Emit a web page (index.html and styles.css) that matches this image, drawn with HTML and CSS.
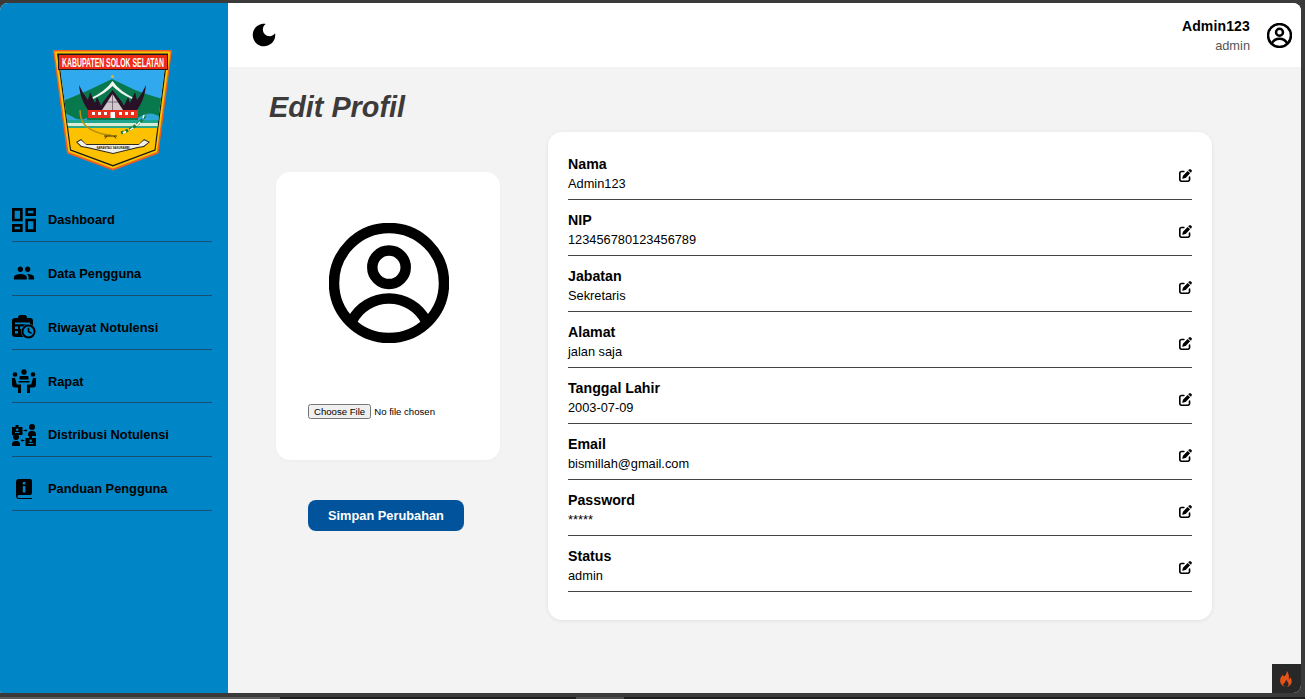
FILE: index.html
```html
<!DOCTYPE html>
<html lang="id">
<head>
<meta charset="utf-8">
<title>Edit Profil</title>
<link rel="stylesheet" href="styles.css">
</head>
<body>
<div class="top-strip"></div>
<div class="window">
  <aside class="sidebar">
    <div class="logo-wrap">
      <svg class="logo" viewBox="0 0 120 121" role="img" aria-label="Logo Kabupaten Solok Selatan">
        <defs><clipPath id="shield-inner"><path d="M5.500 5H113.500L101.500 99.500L60 115L18 99.500Z"/></clipPath></defs>
        <path d="M0 0H119L105.500 103.500L60 120.500L14 103.500Z" fill="#ef5f24"/>
        <path d="M1.500 1.500H117.500L104 102L60 118.500L15.500 102Z" fill="#f8c400"/>
        <path d="M4 3.500H115L102.500 100.500L60 116.500L17 100.500Z" fill="#1a1a1a"/>
        <path d="M5.500 5H113.500L101.500 99.500L60 115L18 99.500Z" fill="#fcc200"/>
        <g clip-path="url(#shield-inner)">
          <rect x="0" y="20" width="120" height="50" fill="#31a9ef"/>
          <path d="M0 55Q20 47 36 40L59 29L82 40Q98 46 120 52V70H0Z" fill="#08794c"/>
          <path d="M0 68Q10 60 18 66T34 68V72H0ZM85 68Q95 61 103 65T120 66V72H85Z" fill="#2ea7d8"/>
          <rect x="0" y="70" width="120" height="3" fill="#1ea58f"/>
          <rect x="0" y="73" width="120" height="3" fill="#dcecd4"/>
          <rect x="0" y="76" width="120" height="2" fill="#29a889"/>
        </g>
        <rect x="5" y="4" width="110" height="16" fill="#1a1a1a"/>
        <rect x="6" y="5" width="108" height="14" fill="#ef2b16"/>
        <text class="logo-title" transform="translate(60 17) scale(.53 1)" text-anchor="middle">KABUPATEN SOLOK SELATAN</text>
        <circle cx="59.500" cy="26.500" r="1.600" fill="#c8b84a"/>
        <path d="M36 49Q52 42 59.500 31Q67 42 83 49L79 49Q66 43 59.500 36Q53 43 40 49Z" fill="#f4f4f4"/>
        <path d="M26 35C27 45 30 53 35 60H50L44 47L42 53L37 42L35 50Q30 44 26 35Z" fill="#2a1026"/>
        <path d="M93 35C92 45 89 53 84 60H69L75 47L77 53L82 42L84 50Q89 44 93 35Z" fill="#2a1026"/>
        <path d="M59.500 40L50 52L46 60H73L69 52Z" fill="#2a1026"/>
        <path d="M59.500 44L49 60H70Z" fill="#cfc8cc"/>
        <path d="M59.500 44V60M54 52H65" stroke="#5c4a58" stroke-width=".7"/>
        <rect x="35" y="60" width="50" height="8" fill="#e8301c"/>
        <path d="M39 62h3v3h-3zM45 62h3v3h-3zM51 62h3v3h-3zM57.500 62h4.500v6h-4.500zM66 62h3v3h-3zM72 62h3v3h-3zM78 62h3v3h-3z" fill="#fff"/>
        <path d="M27 60Q27 74 37 79Q48 85 58 85" fill="none" stroke="#b8930f" stroke-width="1.500"/>
        <path d="M51 86H64M54 86L52 88.500M61 86L63 88.500" stroke="#3c2a00" stroke-width="1"/>
        <path d="M68 83Q80 79 88 71Q93 66 93 62" fill="none" stroke="#1f7a3e" stroke-width="3" stroke-dasharray="3 1.500"/>
        <path d="M70 83l3-1.500M77 80l3-2M84 75l3-3M90 68l1-3" stroke="#fff" stroke-width="1.500"/>
        <path d="M23 92L28 89L33 94H86L91 89L97 92L91 97L85 98L60 104L34 98L28 97Z" fill="#2e2a20"/>
        <path d="M24.500 92.200L28 90.300L33.500 95H85.500L91 90.300L95.500 92.200L90.500 96L84.500 97L60 103L34.500 97L28.500 96Z" fill="#f2f0ea"/>
        <text class="logo-motto" x="60" y="99" text-anchor="middle">SARANTAU SASURAMBI</text>
      </svg>
    </div>
    <nav class="nav">
      <a class="nav-item" href="#">
        <span class="nav-icon"><svg class="icon-24" viewBox="3 3 18 18"><path d="M19 5v2h-4V5h4M9 5v6H5V5h4m10 8v6h-4v-6h4M9 17v2H5v-2h4M21 3h-8v6h8V3zM11 3H3v10h8V3zm10 8h-8v10h8V11zm-10 4H3v6h8v-6z"/></svg></span>
        <span>Dashboard</span>
      </a>
      <a class="nav-item" href="#">
        <span class="nav-icon"><svg class="icon-people" viewBox="0 0 24 24"><path d="M16 11c1.660 0 2.990-1.340 2.990-3S17.660 5 16 5c-1.660 0-3 1.340-3 3s1.340 3 3 3zm-8 0c1.660 0 2.990-1.340 2.990-3S9.660 5 8 5C6.340 5 5 6.340 5 8s1.340 3 3 3zm0 2c-2.330 0-7 1.170-7 3.500V19h14v-2.500c0-2.330-4.670-3.500-7-3.500zm8 0c-.290 0-.620.020-.970.050 1.160.840 1.970 1.970 1.970 3.450V19h6v-2.500c0-2.330-4.670-3.500-7-3.500z"/></svg></span>
        <span>Data Pengguna</span>
      </a>
      <a class="nav-item" href="#">
        <span class="nav-icon"><svg class="icon-24" viewBox="0 0 24 24">
          <path d="M6 3V2.500A2.500 2.500 0 0 1 8.500 0h4A2.500 2.500 0 0 1 15 2.500V3h3a3 3 0 0 1 3 3v16H3a3 3 0 0 1-3-3V6a3 3 0 0 1 3-3z"/>
          <path class="cut" d="M3 7.500h15v1.800H3zM3 11.500h3v2.500H3zM3 16h3v2.500H3zM8 11.500h3v2.500H8z"/>
          <circle class="cut" cx="16.500" cy="16.500" r="7.500"/>
          <circle cx="16.500" cy="16.500" r="7"/>
          <circle class="cut" cx="16.500" cy="16.500" r="5"/>
          <path d="M15.700 12.800h1.600v3.300l2.600 1.600-.8 1.300-3.400-2.100z"/>
        </svg></span>
        <span>Riwayat Notulensi</span>
      </a>
      <a class="nav-item" href="#">
        <span class="nav-icon"><svg class="icon-24" viewBox="0 0 24 24">
          <circle cx="12" cy="3" r="2.700"/><circle cx="3" cy="5.500" r="2.300"/><circle cx="21" cy="5.500" r="2.300"/>
          <path d="M8.500 7h7a1 1 0 0 1 1 1v2.500h-9V8a1 1 0 0 1 1-1zM6.500 12h11v1.500h-11z"/>
          <path d="M0 9h3l1.800 6.500H9V24H6v-5.500H3a3 3 0 0 1-3-3zM24 9h-3l-1.800 6.500H15V24h3v-5.500h3a3 3 0 0 0 3-3z"/>
        </svg></span>
        <span>Rapat</span>
      </a>
      <a class="nav-item" href="#">
        <span class="nav-icon"><svg class="icon-24" viewBox="0 0 24 22">
          <path d="M0 3h3.500V1h3v2H10.500v8H0z"/><circle class="cut" cx="5.200" cy="5.800" r="1.300"/><path class="cut" d="M3 8h4.500v1H3z"/>
          <circle cx="20" cy="3" r="3"/><path d="M16 12v-1.500A3.500 3.500 0 0 1 19.500 7h1a3.500 3.500 0 0 1 3.500 3.500V12z"/>
          <circle cx="4" cy="13" r="3"/><path d="M0 22v-1.500A3.500 3.500 0 0 1 3.500 17h1A3.500 3.500 0 0 1 8 20.500V22z"/>
          <path d="M13.500 14h3.500v-2h3v2h4v8H13.500z"/><circle class="cut" cx="18.700" cy="16.800" r="1.300"/><path class="cut" d="M16.500 19h4.500v1h-4.500z"/>
          <path d="M11.500 6h2V5l2 1.500-2 1.500V7h-2zM12.500 16h-2v-1l-2 1.500 2 1.500v-1h2z"/>
        </svg></span>
        <span>Distribusi Notulensi</span>
      </a>
      <a class="nav-item" href="#">
        <span class="nav-icon"><svg class="icon-book" viewBox="0 0 16 20">
          <path fill-rule="evenodd" d="M3 0H14a2 2 0 0 1 2 2V14a2 2 0 0 1-2 2H3a1.500 1.500 0 0 0 0 3H16V20H3A3 3 0 0 1 0 17V3A3 3 0 0 1 3 0ZM6.800 3v2.500h2.600V3ZM6.800 7v6.500h2.600V7Z"/>
        </svg></span>
        <span>Panduan Pengguna</span>
      </a>
    </nav>
  </aside>
  <div class="content">
    <header class="topbar">
      <svg class="moon" viewBox="0 0 24 24"><path d="M12 3c-4.970 0-9 4.030-9 9s4.030 9 9 9 9-4.030 9-9c0-.460-.040-.920-.100-1.360-.980 1.370-2.580 2.260-4.400 2.260-2.980 0-5.400-2.420-5.400-5.400 0-1.810.890-3.420 2.260-4.400-.440-.060-.900-.100-1.360-.100z"/></svg>
      <div class="user">
        <div class="user-text">
          <div class="user-name">Admin123</div>
          <div class="user-role">admin</div>
        </div>
        <svg class="user-icon" viewBox="0 0 120 120"><use href="#person"/></svg>
      </div>
    </header>
    <main class="main">
      <h1 class="title">Edit Profil</h1>
      <div class="columns">
        <section class="left">
          <div class="photo-card">
            <svg class="avatar" viewBox="0 0 120 120"><use href="#person"/></svg>
            <input class="file" type="file">
          </div>
          <button class="save" type="button">Simpan Perubahan</button>
        </section>
        <section class="info-card">
          <div class="row"><div><div class="label">Nama</div><div class="value">Admin123</div></div><svg class="edit" viewBox="0 0 512 512"><use href="#pen"/></svg></div>
          <div class="row"><div><div class="label">NIP</div><div class="value">123456780123456789</div></div><svg class="edit" viewBox="0 0 512 512"><use href="#pen"/></svg></div>
          <div class="row"><div><div class="label">Jabatan</div><div class="value">Sekretaris</div></div><svg class="edit" viewBox="0 0 512 512"><use href="#pen"/></svg></div>
          <div class="row"><div><div class="label">Alamat</div><div class="value">jalan saja</div></div><svg class="edit" viewBox="0 0 512 512"><use href="#pen"/></svg></div>
          <div class="row"><div><div class="label">Tanggal Lahir</div><div class="value">2003-07-09</div></div><svg class="edit" viewBox="0 0 512 512"><use href="#pen"/></svg></div>
          <div class="row"><div><div class="label">Email</div><div class="value">bismillah@gmail.com</div></div><svg class="edit" viewBox="0 0 512 512"><use href="#pen"/></svg></div>
          <div class="row"><div><div class="label">Password</div><div class="value">*****</div></div><svg class="edit" viewBox="0 0 512 512"><use href="#pen"/></svg></div>
          <div class="row"><div><div class="label">Status</div><div class="value">admin</div></div><svg class="edit" viewBox="0 0 512 512"><use href="#pen"/></svg></div>
        </section>
      </div>
    </main>
  </div>
  <div class="debug-tab">
    <svg class="flame" viewBox="0 0 16 20"><path d="M8 0C9 3 7 5 5 7 3 5.500 3.500 4.500 3.500 4.500 1.500 7 0 9 0 12c0 4 3 7 6 8-2-1.500-2.500-3.500-1.500-5 1 .500 1.500 0 2-1.500.500-1.500 1-3 1-3 1 2.500 3.500 4 3 6.500-.200 1.200-1 2.500-2 3 3-.800 6-3.500 6-7 0-2-.800-4-2-5.500 0 1.500-.500 2.500-1.500 3C11.500 5 10.500 2 8 0Z"/></svg>
  </div>
</div>
<div class="bottom-strip">
  <div class="bottom-gap"></div>
  <div class="scroll">
    <span class="scroll-a"></span><span class="scroll-b"></span><span class="scroll-c"></span><span class="scroll-d"></span>
  </div>
</div>
<svg class="defs" aria-hidden="true"><defs>
  <g id="person" fill="none" stroke="#000">
    <circle cx="60" cy="60" r="55"/>
    <circle cx="60" cy="44.300" r="16.700"/>
    <path d="M23 98A41.700 41.700 0 0 1 97 98"/>
  </g>
  <path id="pen" d="M471.600 21.700c-21.900-21.900-57.300-21.900-79.200 0L362.300 51.700l97.900 97.900 30.100-30.100c21.900-21.900 21.900-57.300 0-79.200L471.600 21.700zm-299.200 220c-6.100 6.100-10.800 13.600-13.500 21.900l-29.600 88.800c-2.900 8.600-.600 18.100 5.800 24.600s15.900 8.700 24.600 5.800l88.800-29.600c8.200-2.700 15.700-7.400 21.900-13.500L437.700 172.300 339.700 74.300 172.400 241.700zM96 64C43 64 0 107 0 160V416c0 53 43 96 96 96H352c53 0 96-43 96-96V320c0-17.700-14.300-32-32-32s-32 14.300-32 32v96c0 17.700-14.300 32-32 32H96c-17.700 0-32-14.300-32-32V160c0-17.700 14.300-32 32-32h96c17.700 0 32-14.300 32-32s-14.300-32-32-32H96z"/>
</defs></svg>
</body>
</html>
```

FILE: styles.css
```css
* { box-sizing: border-box; }

html, body { height: 100%; }

body {
  margin: 0;
  background: #3a3a3a;
  font-family: "Liberation Sans", Arial, sans-serif;
  color: #000;
  display: flex;
  flex-direction: column;
  overflow: hidden;
}

.top-strip { height: 3px; flex: none; }

.window {
  position: relative;
  height: 690px;
  flex: none;
  margin-right: 4px;
  display: flex;
  border-radius: 8px 8px 8px 2px;
  overflow: hidden;
  background: #f3f3f3;
}

.sidebar {
  width: 228px;
  flex: none;
  background: #0086c6;
  padding: 0 16px 0 12px;
}

.logo-wrap {
  height: 185.300px;
  padding: 47px 0 0 40.500px;
}

.logo { display: block; width: 120px; height: 121px; }

.logo-title {
  font-family: "Liberation Sans", Arial, sans-serif;
  font-size: 13px;
  font-weight: 700;
  fill: #fff;
}

.logo-motto {
  font-family: "Liberation Sans", Arial, sans-serif;
  font-size: 2.800px;
  font-weight: 700;
  fill: #222;
}

.nav { display: flex; flex-direction: column; }

.nav-item {
  display: flex;
  align-items: center;
  height: 53.800px;
  padding-top: 10px;
  border-bottom: 1px solid #17506f;
  color: #000;
  text-decoration: none;
  font-size: 12.800px;
  font-weight: 700;
}

.nav-icon {
  width: 36px;
  flex: none;
  display: flex;
  align-items: center;
}

.nav-icon svg { display: block; fill: #000; }

.icon-people { width: 22px; height: 22px; margin-left: 1px; }
.icon-24 { width: 24px; height: 24px; }
.icon-book { width: 16px; height: 20px; margin-left: 4px; }
.cut { fill: #0086c6; }

.content {
  flex: 1;
  min-width: 0;
  display: flex;
  flex-direction: column;
}

.topbar {
  height: 64px;
  flex: none;
  background: #fff;
  display: flex;
  align-items: center;
  justify-content: space-between;
  padding: 0 9px 0 21px;
}

.moon { width: 30px; height: 30px; display: block; fill: #000; }

.user { display: flex; align-items: center; gap: 17px; }

.user-text { text-align: right; padding-top: 1px; }

.user-name { font-size: 14px; font-weight: 700; line-height: 17px; letter-spacing: .15px; }

.user-role { font-size: 12.800px; line-height: 15px; margin-top: 3px; color: #555; }

.user-icon { width: 25px; height: 25px; display: block; stroke-width: 12; }

.main { flex: 1; padding: 24px 0 0 41px; }

.title {
  margin: 0;
  font-size: 28.800px;
  line-height: 33px;
  font-weight: 700;
  font-style: italic;
  color: #3d3a3a;
}

.columns {
  display: flex;
  align-items: flex-start;
  margin-top: 8px;
  padding-left: 7px;
  gap: 48px;
}

.left { width: 224px; flex: none; padding-top: 40px; }

.photo-card {
  height: 288px;
  background: #fff;
  border-radius: 14px;
  padding: 51px 32px 0;
  box-shadow: 0 1px 3px rgba(0, 0, 0, .03);
}

.avatar { display: block; width: 120px; height: 120px; margin-left: 20.500px; stroke-width: 10.500; }

.file {
  display: block;
  width: 160px;
  margin-top: 61px;
  font-family: "Liberation Sans", Arial, sans-serif;
  font-size: 9.600px;
}

.file::file-selector-button {
  padding: 0 4px;
  margin-right: 3px;
  font-size: 9.600px;
}

.save {
  display: block;
  width: 156px;
  height: 31px;
  margin: 40px 0 0 32px;
  border: 0;
  border-radius: 8px;
  background: #01549b;
  color: #fff;
  font-family: "Liberation Sans", Arial, sans-serif;
  font-size: 12.800px;
  font-weight: 700;
}

.info-card {
  width: 664px;
  flex: none;
  background: #fff;
  border-radius: 14px;
  padding: 12px 20px 28px;
  box-shadow: 0 1px 4px rgba(0, 0, 0, .08);
}

.row {
  height: 56px;
  border-bottom: 1px solid #444;
  display: flex;
  align-items: center;
  justify-content: space-between;
  padding-top: 3px;
}

.label { font-size: 14.200px; font-weight: 700; line-height: 16px; }

.value { font-size: 12.800px; line-height: 15px; margin-top: 4px; }

.edit { width: 13px; height: 13px; display: block; fill: #000; margin-top: 5px; }

.debug-tab {
  position: absolute;
  right: 0;
  bottom: 0;
  width: 29px;
  height: 29px;
  background: #282828;
  display: flex;
  align-items: center;
  justify-content: center;
}

.flame { width: 13px; height: 16px; display: block; fill: #e4531a; }

.bottom-strip { flex: 1; display: flex; flex-direction: column; }

.bottom-gap { height: 4px; flex: none; }

.scroll { flex: 1; display: flex; background: #1d1d1d; }

.scroll-a { width: 280px; background: #5c5c5c; }
.scroll-b { width: 296px; }
.scroll-c { width: 48px; background: #4c4c4c; }
.scroll-d { flex: 1; }

.defs { position: absolute; width: 0; height: 0; }
```
